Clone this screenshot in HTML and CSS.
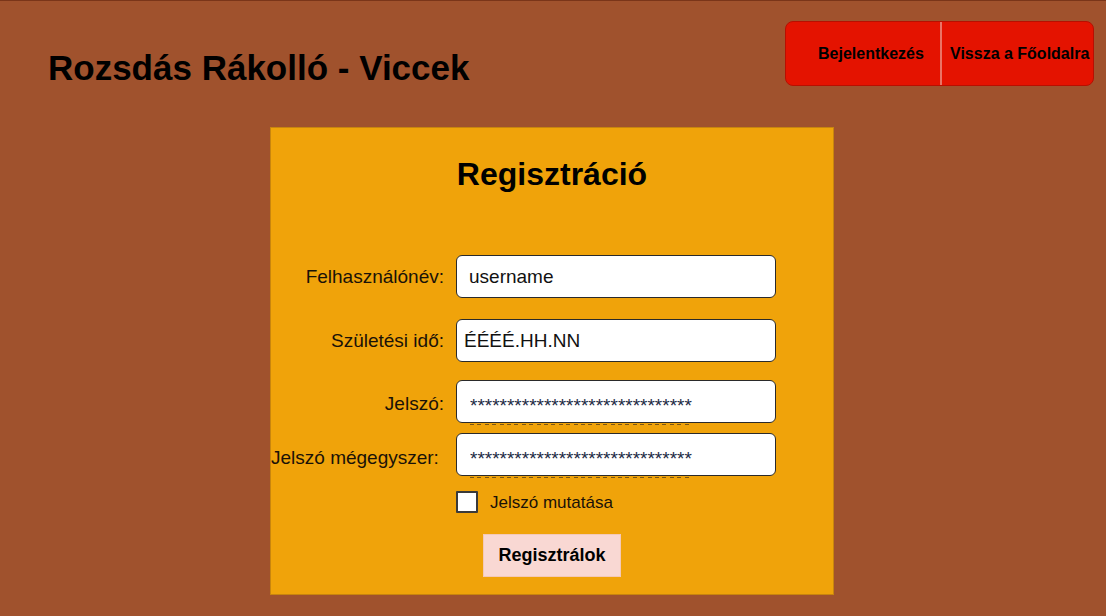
FILE: index.html
```html
<!DOCTYPE html>
<html lang="hu">
<head>
<meta charset="utf-8">
<title>Rozsdás Rákolló - Viccek</title>
<link rel="stylesheet" href="styles.css">
</head>
<body>
<header class="topbar">
  <h1 class="site-title">Rozsdás Rákolló - Viccek</h1>
  <nav class="nav">
    <a class="nav-btn nav-login" href="#">Bejelentkezés</a>
    <a class="nav-btn nav-home" href="#">Vissza a Főoldalra</a>
  </nav>
</header>
<main class="card">
  <h2 class="card-title">Regisztráció</h2>
  <form class="form">
    <div class="row row-user">
      <label class="label" for="u">Felhasználónév:</label>
      <div class="field"><input class="input" id="u" type="text" placeholder="username"></div>
    </div>
    <div class="row row-date">
      <label class="label" for="d">Születési idő:</label>
      <div class="field"><input class="input input-date" id="d" type="text" placeholder="ÉÉÉÉ.HH.NN"></div>
    </div>
    <div class="row row-pass">
      <label class="label" for="p1">Jelszó:</label>
      <div class="field"><input class="input input-pass" id="p1" type="text" placeholder="******************************"><span class="ghost"></span></div>
    </div>
    <div class="row row-pass2">
      <label class="label" for="p2">Jelszó mégegyszer:</label>
      <div class="field"><input class="input input-pass" id="p2" type="text" placeholder="******************************"><span class="ghost"></span></div>
    </div>
    <div class="check-row">
      <input class="checkbox" id="show" type="checkbox">
      <label class="check-label" for="show">Jelszó mutatása</label>
    </div>
    <div class="submit-row">
      <button class="submit" type="button">Regisztrálok</button>
    </div>
  </form>
</main>
</body>
</html>
```
FILE: styles.css
```css
* { box-sizing: border-box; }

html, body {
  margin: 0;
  padding: 0;
}

body {
  background: #a0522d;
  border-top: 1px solid #7a3519;
  font-family: "Liberation Sans", Arial, sans-serif;
  color: #111;
  min-height: 616px;
}

.topbar {
  display: flex;
  justify-content: space-between;
  align-items: flex-start;
  padding: 20px 12px 0 48px;
}

.site-title {
  margin: 27px 0 0 0;
  font-size: 35px;
  line-height: 40px;
  font-weight: bold;
  color: #000;
}

.nav {
  display: flex;
  height: 65px;
  background: #e41300;
  border: 1px solid #b80f00;
  border-radius: 8px;
  overflow: hidden;
}

.nav-btn {
  display: flex;
  align-items: center;
  font-size: 16px;
  font-weight: bold;
  color: #000;
  text-decoration: none;
  white-space: nowrap;
}

.nav-login {
  width: 154px;
  padding-left: 32px;
}

.nav-home {
  width: 153px;
  border-left: 2px solid #ea7466;
  padding-left: 8px;
}

.card {
  width: 564px;
  margin: 39px 0 0 calc(50% - 283px);
  background: #f0a30a;
  border: 1px solid #c8850e;
  padding: 28px 0 17px;
}

.card-title {
  margin: 0;
  text-align: center;
  font-size: 32px;
  line-height: 37px;
  font-weight: bold;
  color: #000;
}

.form {
  margin-top: 62px;
}

.row {
  display: flex;
  align-items: center;
}

.row-date { margin-top: 21px; }
.row-pass { margin-top: 18px; }
.row-pass2 { margin-top: 10px; }

.label {
  width: 173px;
  margin-right: 12px;
  text-align: right;
  font-size: 19px;
  color: #1a1208;
  white-space: nowrap;
}

.row-pass .label,
.row-pass2 .label { padding-top: 4px; }
.row-pass2 .label { margin-right: 18px; width: 167px; padding-top: 6px; }

.field {
  position: relative;
}

.input {
  display: block;
  width: 320px;
  height: 43px;
  border: 1px solid #2a2a2a;
  border-radius: 6px;
  background: #fff;
  padding: 0 12px;
  font-family: "Liberation Sans", Arial, sans-serif;
  font-size: 19px;
  color: #111;
  outline: none;
}

.input::placeholder {
  color: #111;
  opacity: 1;
}

.input-date {
  padding-left: 7px;
}

.input-pass {
  padding-top: 9px;
  padding-left: 13px;
  font-size: 19px;
}

.input-pass::placeholder {
  color: #1c2a44;
}

.ghost {
  position: absolute;
  left: 14px;
  bottom: -2px;
  width: 221px;
  height: 1px;
  background: repeating-linear-gradient(90deg, rgba(60, 45, 25, 0.65) 0 4px, transparent 4px 7.4px);
}

.check-row {
  display: flex;
  align-items: center;
  margin-top: 15px;
  padding-left: 185px;
  height: 22px;
}

.checkbox {
  appearance: none;
  -webkit-appearance: none;
  width: 22px;
  height: 22px;
  margin: 0 12px 0 0;
  background: #fff;
  border: 2px solid #3a3a3a;
  border-radius: 1px;
}

.check-label {
  font-size: 17px;
  color: #1a1208;
  padding-top: 2px;
}

.submit-row {
  display: flex;
  justify-content: center;
  margin-top: 21px;
}

.submit {
  width: 138px;
  height: 43px;
  background: #f9d8d3;
  border: 1px solid #f4c9b8;
  font-family: "Liberation Sans", Arial, sans-serif;
  font-size: 18px;
  font-weight: bold;
  color: #000;
  padding: 0;
  cursor: pointer;
}
```
